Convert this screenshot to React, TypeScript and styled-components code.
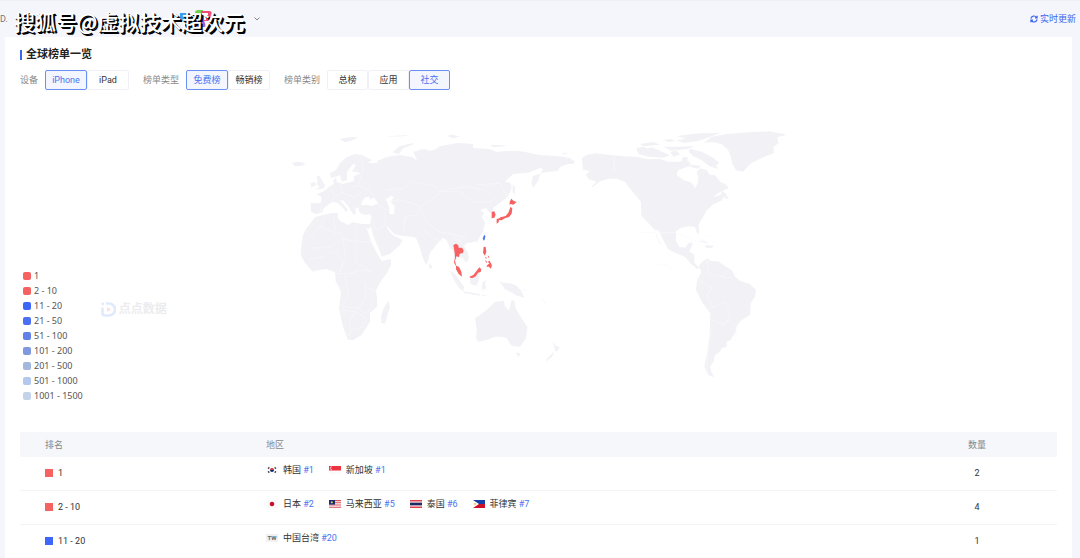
import React from "react";
import styled, { createGlobalStyle } from "styled-components";

const GlobalStyle = createGlobalStyle`
  *, *::before, *::after { box-sizing: border-box; }
  body {
    margin: 0;
    background: #f4f6fb;
    color: #333;
    font: 9px/14px Roboto, "Noto Sans CJK SC", sans-serif;
  }
  button { font: inherit; }
`;

/* ---------- top bar ---------- */

const TopBar = styled.header`
  position: relative;
  display: flex;
  align-items: center;
  justify-content: space-between;
  height: 37px;
  padding: 0 4px 0 0;
  border-top: 1px solid #eceff5;
`;

const Crumbs = styled.nav`
  display: flex;
  align-items: center;
  color: #777;
`;

const CrumbText = styled.span`
  width: 180px;
`;

const AppIcons = styled.svg`
  width: 33px;
  height: 18px;
`;

const Chevron = styled.svg`
  width: 6px;
  height: 4px;
  margin-left: 41px;
`;

const Watermark = styled.div`
  position: absolute;
  left: 14px;
  top: 4px;
  font: 500 21px/32px "Noto Sans CJK SC", sans-serif;
  color: #fff;
  white-space: nowrap;
  text-shadow: 1px 1px 0 #000, 2px 2px 0 #000;
`;

const Refresh = styled.a`
  display: flex;
  align-items: center;
  gap: 2px;
  color: #3d66f0;
  text-decoration: none;
`;

/* ---------- card ---------- */

const Card = styled.main`
  margin: 0 8px 0 5px;
  padding: 8px 15px 0;
  background: #fff;
`;

const Title = styled.h1`
  display: flex;
  align-items: center;
  gap: 4px;
  height: 20px;
  margin: 0 0 5px;
  font-size: 11px;
  font-weight: 700;
  color: #222;

  &::before {
    content: "";
    width: 2px;
    height: 10px;
    background: #3d66f0;
  }
`;

const Filters = styled.div`
  display: flex;
  flex-wrap: wrap;
  gap: 14px;
`;

const Filter = styled.div`
  display: flex;
  align-items: center;
  gap: 7px;
  color: #888;
`;

const Options = styled.div`
  display: flex;
`;

const Option = styled.button<{ $active?: boolean; $width: number }>`
  min-width: ${(p) => p.$width}px;
  height: 20px;
  padding: 0 6px;
  border: 1px solid ${(p) => (p.$active ? "#6b90f5" : "#eff1f7")};
  border-radius: 2px;
  background: ${(p) => (p.$active ? "#f3f6ff" : "#fff")};
  color: ${(p) => (p.$active ? "#4a73f0" : "#333")};
  line-height: 16px;
`;

/* ---------- map ---------- */

const MapArea = styled.section`
  display: grid;
  min-height: 342px;

  > * {
    grid-area: 1 / 1;
  }
`;

const MapSvg = styled.svg`
  justify-self: center;
  width: 100%;
  max-width: 521px;
  height: 342px;
`;

const MapSide = styled.div`
  display: flex;
  align-items: flex-end;
  justify-self: start;
  gap: 18px;
  padding: 0 0 29px 3px;
`;

const Legend = styled.ul`
  margin: 0;
  padding: 0;
  list-style: none;
  font-family: "Noto Sans", sans-serif;
  color: #555;
`;

const LegendItem = styled.li`
  display: flex;
  align-items: center;
  gap: 3px;
  height: 15px;
  line-height: 15px;
`;

const Swatch = styled.span<{ $color: string; $square?: boolean }>`
  flex: none;
  width: 8px;
  height: 8px;
  border-radius: ${(p) => (p.$square ? 0 : 2)}px;
  background: ${(p) => p.$color};
`;

const Brand = styled.div`
  display: flex;
  align-items: center;
  gap: 3px;
  height: 20px;
  margin-bottom: 84px;
  font-size: 12px;
  font-weight: 700;
  color: #ececef;
`;

/* ---------- table ---------- */

const Table = styled.table`
  width: 100%;
  border-spacing: 0;
  table-layout: fixed;
`;

const HeadCell = styled.th<{ $width?: number; $center?: boolean }>`
  width: ${(p) => (p.$width ? `${p.$width}px` : "auto")};
  height: 25px;
  padding: 0 0 0 ${(p) => (p.$center ? 0 : 25)}px;
  background: #f6f7fa;
  color: #888;
  font-weight: 400;
  text-align: ${(p) => (p.$center ? "center" : "left")};
`;

const Cell = styled.td<{ $center?: boolean; $raised?: boolean }>`
  height: 34px;
  padding: 0 0 ${(p) => (p.$raised ? 7 : 1)}px ${(p) => (p.$center ? 0 : 25)}px;
  border-bottom: 1px solid #f3f4f7;
  text-align: ${(p) => (p.$center ? "center" : "left")};

  tr:last-child > & {
    height: 33px;
    border-bottom: 0;
  }
`;

const Rank = styled.div`
  display: flex;
  align-items: center;
  gap: 5px;
`;

const Regions = styled.div`
  display: flex;
  gap: 15px;
`;

const Region = styled.span`
  display: flex;
  align-items: center;
  gap: 5px;
`;

const RegionRank = styled.a`
  color: #4a73f0;
  text-decoration: none;
`;

const FlagSvg = styled.svg`
  width: 12px;
  height: 8px;
`;

const FlagCode = styled.span`
  width: 12px;
  background: #f1f1f1;
  color: #666;
  font-size: 6px;
  font-weight: 700;
  line-height: 8px;
  text-align: center;
`;

/* ---------- data ---------- */

const legend: [string, string][] = [
  ["1", "#f66162"],
  ["2 - 10", "#f66162"],
  ["11 - 20", "#3d66fb"],
  ["21 - 50", "#4a6ff2"],
  ["51 - 100", "#6481e8"],
  ["101 - 200", "#8098de"],
  ["201 - 500", "#a2b8dc"],
  ["501 - 1000", "#b3c8ee"],
  ["1001 - 1500", "#c4d3e9"],
];

const filters = [
  { label: "设备", width: 42, options: ["iPhone", "iPad"], active: "iPhone" },
  { label: "榜单类型", width: 42, options: ["免费榜", "畅销榜"], active: "免费榜" },
  { label: "榜单类别", width: 41, options: ["总榜", "应用", "社交"], active: "社交" },
];

const rows = [
  {
    range: "1",
    color: "#f66162",
    count: 2,
    regions: [
      { code: "KR", name: "韩国", rank: "#1" },
      { code: "SG", name: "新加坡", rank: "#1" },
    ],
  },
  {
    range: "2 - 10",
    color: "#f66162",
    count: 4,
    regions: [
      { code: "JP", name: "日本", rank: "#2" },
      { code: "MY", name: "马来西亚", rank: "#5" },
      { code: "TH", name: "泰国", rank: "#6" },
      { code: "PH", name: "菲律宾", rank: "#7" },
    ],
  },
  {
    range: "11 - 20",
    color: "#3d66fb",
    count: 1,
    regions: [{ code: "TW", name: "中国台湾", rank: "#20" }],
  },
];

const flags: Record<string, React.ReactNode> = {
  KR: (
    <>
      <path d="M4 4a2 2 0 0 1 4 0z" fill="#cd2e3a" />
      <path d="M4 4a2 2 0 0 0 4 0z" fill="#0f2f7a" />
      <path d="M2 2.4l1.4-1M2 5.6l1.4 1M10 2.4l-1.4-1M10 5.6l-1.4 1" stroke="#222" strokeWidth="1.2" />
    </>
  ),
  SG: (
    <>
      <path d="M0 0h12v4.500H0z" fill="#ee3340" />
      <path d="M3 1a1.300 1.300 0 1 0 0 2.400" fill="none" stroke="#fff" strokeWidth=".6" />
    </>
  ),
  JP: <circle cx="6" cy="4" r="2.300" fill="#c8102e" />,
  MY: (
    <>
      <path d="M0 .6h12M0 2.800h12M0 5h12M0 7.200h12" stroke="#e0505a" strokeWidth="1.100" />
      <path d="M0 0h6v4.600H0z" fill="#1b2a73" />
      <circle cx="2.800" cy="2.300" r="1.100" fill="#e8c93a" />
    </>
  ),
  TH: (
    <>
      <path d="M0 .7h12M0 7.300h12" stroke="#e0404a" strokeWidth="1.400" />
      <path d="M0 4h12" stroke="#24275f" strokeWidth="2.800" />
    </>
  ),
  PH: (
    <>
      <path d="M0 0h12v4H0z" fill="#1740a8" />
      <path d="M0 4h12v4H0z" fill="#ce1126" />
      <path d="M0 0l6 4-6 4z" fill="#fff" />
      <circle cx="2" cy="4" r="1" fill="#f4c430" />
    </>
  ),
};

function Flag({ code }: { code: string }) {
  if (!flags[code]) return <FlagCode>{code}</FlagCode>;
  return (
    <FlagSvg viewBox="0 0 12 8" aria-hidden="true">
      <path d="M0 0h12v8H0z" fill="#fafafa" />
      {flags[code]}
    </FlagSvg>
  );
}

function WorldMap() {
  return (
    <MapSvg viewBox="278 90 521 342" role="img" aria-label="全球榜单地图">
      <g fill="#f2f1f6">
        {/* Europe, Asia and Africa */}
        <path d="M310.700 203.300L311 212 316 214 321.700 212.700 324 208 329 204 333 202 338 203 343 208 346 212 348 210 344 205 340 201 343 200 348 206 351 211 354 215 356 213 355 209 358 207 360 213 365 215 370 214 371.500 217 370 224 363 224 356.700 223 352 222 349 225 344 223 340 221 337.700 217 338 213 332 213 323 215 315 217 310.700 223 306 229 303 235 301.700 243 300.700 255 305 263 312.700 271.700 319 270 326.700 269 331 271 335 271.700 335.700 281.700 339 287 341 293 339 308 341 318 343 326.700 348 340 353 340 361.700 335 366.700 326.700 370 322 370 313 377 306.700 377 298 376 290 381.700 280 387 273 391 265 391 259 381.700 261 378 255 371.700 243 368 232 366 227 368 229 371 227 374 238 378 246.700 381.700 256.700 390 254 400 245 402.700 240 396.700 237 394 236 390 232 386 226 388 227 394 234 401.700 235.700 411.700 236.700 416 238 418 242.700 421 251.700 424 261 426 265 428 261.700 430 252.700 438 243 442.700 238 446.700 240 450 248 453 250 455 262 458 257 463 258 466 263 469 258 468 253 464 246 466.700 242.700 471.700 242.700 478 240 483 231.700 485 223 481.700 216.700 484 213 480 210 486 208 490 213 494 213 493 208 500 202.700 508 196.700 511.700 188 510.700 183 505 181.700 513 174 528 172.700 540 168 543 169 540 175 538 181 533 188 531.500 183 533 176 543 172.700 558 170.700 560 167 565 165 575 162 570 158 557 156 540 155 520 151 505 151 496.700 152 490 149 473 148 473 144 458 143 440 146 436 149 430 151 424 149 418 150 420 156 418 161 412 157 400 155 386.700 157 377 161 377 163 368 163 372 160 362 155 355 154 347 157 340 163 336 170 330 173 331 178 335 177 340 175 342 181.700 347 180 347 172 353 164 356 165 351.700 171.700 361 173 354 176 354 181 343 184 337 182 336 178 333 180 334 184 329 186.700 323 191.700 316.700 194 321.700 197 320.700 203z" />
        {/* islands of Europe and the Arctic */}
        <g transform="translate(290 120) scale(.3333)">
          <path d="M5 128l20-3 22 5-10 7-22 2zM80 170l8-3 5 10 12 18-3 10-25 5 12-10-10-8 4-8zM62 190l12-5 3 10-13 8zM148 57l30-5 25-1-10 8-18 5-8 3-10-5zM308 97l20-18 40-10 2 4-30 12-15 18zM370 95l15-3 5 12 18-6 5 12-20 14-12-3zM284 50l30-3 45-2-20 4zM470 47l15-3 25 5-20 6zM600 75l35 0 15 3-40 4zM815 98l22 2-15 3zM668 192l8 10-2 24-6-12z" />
        </g>
        {/* Madagascar and Sri Lanka */}
        <g transform="translate(290 230) scale(.3333)">
          <path d="M296 212l4 20-8 25-7 24-11-3-1-18 8-25zM418 98l9 12-5 8-5-7z" />
        </g>
        {/* South-east Asia and Oceania */}
        <g transform="translate(440 230) scale(.3333)">
          <path d="M105 265l15-10 20-15 15-15 12-10 25-3 2 16 13 13 8-31 8 3 4 22 18 30 17 25-4 35-18 25-25-2-15-23-15-5-20 0-25 10-25 5-7-10 2-25zM228 368l14 2-7 12zM340 334l8 14 12 3-10 15-6-8zM342 366l-4 12-20 17 2-8 15-15zM178 153l12 5 20 2 18 6 15 15 10 22-25-7-15-10-18-8zM250 182l12-6-8 8zM30 120l18 16 24 34-2 14-15-12-15-26zM70 184l50 8-2 5-46-8zM90 142l30-17-3 25-8 18-18-6zM128 155l12-3-5 8 5 20-8-5-2 12-4-14zM120 194l25 1-15 3zM300 204l18 14-3 1zM308 260l8 6-4-1zM106 32l8-2-2 6-6 1z" />
        </g>
        {/* North America and Greenland */}
        <g transform="translate(570 120) scale(.3333)">
          <path d="M35 115l15-10 25-5 45 5 45 4 35 1 35 8 35-1 25 8 35 0 15-10 12 10 8 12-15 4-25 9-5 15 20 15 25 8 10 17 8-15 2-20-5-15 10-10 20 5 10 15 15 0 15 20 20 10 6 10-25 10-22 16 22-5 6-16 10 12 10 14-8 0-8-6-6 12-24 10-20 18-10 18-15 25 1 30-6-5-6-17-20-2-20 4-17 10 0 30 10 18 18 2 10-15 12 0-4 14-6 13 15 8 0 25 13 14 12-7 0 6-16 6-18-14-18-22-30-12-22-12-18-34-10-22-12-2 16 40 6 8-8-6-16-44-8-8-30-32-1-42-12-14-25-30-10-15-25-10-25 0-25 8-20 15-10 5 18-18-22-8-10-14 12-10-20-5zM0 125l15-2-5 10-10-2zM370 360l20 5 12 8-25-12zM405 376l28 4-12 4-15-2z" />
          <path d="M400 70l25-20 45-8 65-5 65-3 50 10-28 8 4 18-15 10 0 20-32 12-35 18-12 10-12 15-22-4-12-22-4-20-8-20-20-17-30-6z" />
          <path d="M360 86l35 9 35 18 18 16-10 8 7 10-26-8-24-18-25-12-14-14zM205 92l40-10 25 10 30 14-20 7-45-3-30-8zM198 84l25-4 10 7-30 9zM320 48l70-8 60-1-25 10-40 14-42 6-24-8 28-5zM210 72l40-6 20 8-50 5zM280 80l50 0 45-2-20 8-50 6zM280 60l25-3 10 6-20 3zM300 95l20-3 10 12-20 6zM360 140l10-6 22 4-10 8zM340 110l15 3-5 10-15-4z" />
        </g>
        {/* South America */}
        <path
          transform="translate(660 240) scale(.3333)"
          d="M118 75l12-13 15-7 5 8 25 1 20 14 20 12 10 20 15 12 30 10 18 18-3 20-13 20-2 35-25 15-13 15-7 25-13 20-12 5 0 15-15 5-5 10-15 10-5 20-10 15 5 18 8 14-18-7-12-25 8-40 7-50 3-70-23-30-20-40 3-30 12-20zM115 0l20 4 12 8-20-6zM140 16l22 1-8 6-14-1z"
        />
      </g>
      {/* Black and Caspian seas */}
      <g fill="#fff" transform="translate(290 120) scale(.3333)">
        <path d="M217 242l12-12 10 2 0 8 12-8 14 18-18 8-20-4-14 2zM288 238l14-10 10 3-10 14 12 14-2 24-14-2 0-18z" />
      </g>
      {/* national borders */}
      <g fill="none" stroke="#faf9fc" strokeWidth="1.800" transform="translate(290 120) scale(.3333)">
        <path d="M215 105l5 45-8 20-5 25 28 15 20 20M120 205l15 25-10 18M150 190l8 30 35 12 20-12M160 215l-20 12M170 232l12 25M180 208l10-10 20 0M95 250l-4 30M265 255l25 15M290 210l50-5 30-20 70 15 10 20-60 40-20-10-45-10-30 5M450 215l60 0 40 32 50 0 15-15-35-22-50-10-40 5zM560 195l70-5 25 45-20 10M395 260l-15 25-35 5-5 45M395 275l15 30 35 30 30 5 40 10M245 290l10 40 30-15 0-40M130 290l5 40 45 35M60 350l30-30 50 20M90 320l15-30M60 385l60-5 40-25 40 10 0-45M200 365l50 0M60 420l40-10 35-15 20 20 0 35M160 355l5 60-20 50M200 365l-5 60 50 30M245 455l-30-5-35 10-40 0M165 465l10 60-20 35 50 5 20-25 0-60M225 500l30 15M205 565l20 15 20-15 0-50M155 570l40 5-15 30 0 40-20-5M195 575l35 20-10 25-35 10M400 330l30 25 30 10M490 350l20 15 20-25 10-10" />
        <path d="M973 103l0 55M1043 338l110 0 50 15 5 22 50-30M1088 430l45 5 15 20" />
        <path d="M1250 420l5 40 40 10 20-20M1220 480l25 10 20 15-15 20 20 40M1255 570l50-25 15 40-15 30-50-20M1315 600l25 20-5 45M1265 620l-10 60-5 70M1295 470l30 5 15-20" />
      </g>
      {/* ranked regions */}
      <g fill="#f66162" transform="translate(440 120) scale(.3333)">
        <path d="M214 236l6 6 10 4-10 8-8-2-3 4 0-10zM211 261l6 4-2 16-8 10-12 4-8 4-10 1-8 4 12-12 16-4 8-10 4-10zM170 297l8-2-2 12-6 4zM184 296l6 0-4 5-5 0zM155 276l8-2 4 10-4 9-8 2 0-10z" />
      </g>
      <g fill="#f66162" transform="translate(440 230) scale(.3333)">
        <path d="M40 45l8-4 7 5 1 7 10 0 5 8-2 8-10 2-2 10-8-2-4 14 4 14 8 4 7 14 2 15-10-8-8-14 0-10-6-10 3-16-1-14zM88 140l12-5 10-13 8-10 6 6-2 8-8 2-6 10-8 5-8 1zM131 50l6 1 2 14-4 12-6-8zM134 80l7 4-3 2zM143 76l5 4-2 5zM136 90l6 6-4 2zM145 94l5-2 0 8-5-2zM124 93l-6 8 4-5zM142 105l10-8 4 10-4 9-5-6-8 0z" />
      </g>
      <path d="M484 235l1.500 1-1 4-1 .5-.7-2z" fill="#4a73f0" />
    </MapSvg>
  );
}

export default function App() {
  return (
    <>
      <GlobalStyle />
      <TopBar>
        <Crumbs>
          <CrumbText>D.</CrumbText>
          <AppIcons viewBox="0 0 33 18" aria-hidden="true">
            <path d="M0 3h10v8H0z" fill="#3d9df0" />
            <path d="M15 3q0-3 3-3h5v9h-8z" fill="#76cf55" />
            <path d="M21 1h8q3 0 3 3v7H21z" fill="#ee4c75" />
            <path d="M15 9l8-2 3 10h-8q-3 0-3-3z" fill="#9b62d8" />
            <path d="M22 4h6M25 4v6" stroke="#fff" strokeWidth="2" />
          </AppIcons>
          <Chevron viewBox="0 0 6 4" aria-hidden="true">
            <path d="M.5.500L3 3 5.500.500" fill="none" stroke="#888" />
          </Chevron>
        </Crumbs>
        <Refresh href="#refresh">
          <svg width="8" height="8" viewBox="0 0 9 9" fill="none" stroke="#3d66f0" strokeWidth="1.300" aria-hidden="true">
            <path d="M1 4A3.500 3.300 0 0 1 7.400 2.700M8 5A3.500 3.300 0 0 1 1.600 6.300M8 .8v2.400H5.600M1 8.200V5.800h2.400" />
          </svg>
          实时更新
        </Refresh>
        <Watermark>搜狐号@虚拟技术超次元</Watermark>
      </TopBar>
      <Card>
        <Title>全球榜单一览</Title>
        <Filters>
          {filters.map((f) => (
            <Filter key={f.label} role="group" aria-label={f.label}>
              <span>{f.label}</span>
              <Options>
                {f.options.map((o) => (
                  <Option key={o} type="button" $width={f.width} $active={o === f.active} aria-pressed={o === f.active}>
                    {o}
                  </Option>
                ))}
              </Options>
            </Filter>
          ))}
        </Filters>
        <MapArea>
          <WorldMap />
          <MapSide>
            <Legend>
              {legend.map(([label, color]) => (
                <LegendItem key={label}>
                  <Swatch $color={color} />
                  {label}
                </LegendItem>
              ))}
            </Legend>
            <Brand>
              <svg width="15" height="15" viewBox="0 0 15 15" fill="none" aria-hidden="true">
                <path d="M5 1.500h3a6 6 0 0 1 0 12H3.500Q1.500 13.500 1.500 11V5.500" stroke="#e1eafc" strokeWidth="2.600" />
                <circle cx="1.800" cy="2" r="1.400" fill="#e1eafc" />
                <path d="M6 5l4 2.500L6 10z" fill="#fbe0e2" />
              </svg>
              点点数据
            </Brand>
          </MapSide>
        </MapArea>
        <Table>
          <thead>
            <tr>
              <HeadCell scope="col" $width={221}>排名</HeadCell>
              <HeadCell scope="col">地区</HeadCell>
              <HeadCell scope="col" $width={160} $center>数量</HeadCell>
            </tr>
          </thead>
          <tbody>
            {rows.map((r) => (
              <tr key={r.range}>
                <Cell>
                  <Rank>
                    <Swatch $color={r.color} $square />
                    {r.range}
                  </Rank>
                </Cell>
                <Cell $raised>
                  <Regions>
                    {r.regions.map((g) => (
                      <Region key={g.code}>
                        <Flag code={g.code} />
                        <span>
                          {g.name} <RegionRank href={`#${g.code}`}>{g.rank}</RegionRank>
                        </span>
                      </Region>
                    ))}
                  </Regions>
                </Cell>
                <Cell $center>{r.count}</Cell>
              </tr>
            ))}
          </tbody>
        </Table>
      </Card>
    </>
  );
}
